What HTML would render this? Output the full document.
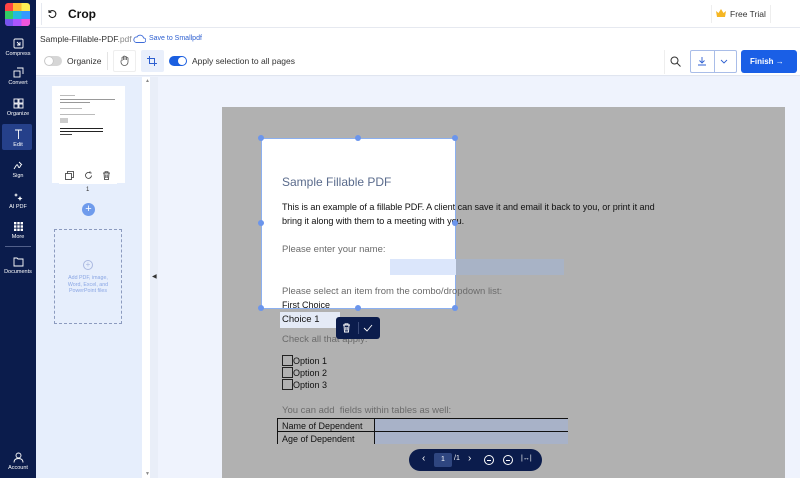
<!DOCTYPE html>
<html><head><meta charset="utf-8"><style>
*{margin:0;padding:0;box-sizing:border-box}
body{width:800px;height:478px;overflow:hidden;font-family:"Liberation Sans",sans-serif;background:#eef2fb;position:relative}
.abs{position:absolute}
.sb{left:0;top:0;width:36px;height:478px;background:#0b1c4c;color:#fff}
.sb .it{position:absolute;left:0;width:36px;text-align:center;font-size:5.5px}
.sb svg{display:block;margin:0 auto 2px}
.hdr{left:36px;top:0;width:764px;height:28px;background:#fff;border-bottom:1px solid #e6e9f0}
.tb{left:36px;top:28px;width:764px;height:48px;background:#fff;border-bottom:1px solid #e0e5f0}
.txt{font-size:9px;color:#333}
.pdf{font-family:"Liberation Sans",sans-serif;font-size:8.5px;color:#111}
.lt{color:#6b6b6b}
</style></head><body>
<div class="abs sb">
  <div class="abs" style="left:5px;top:3px;width:25px;height:23px;border-radius:3px;overflow:hidden;background:linear-gradient(90deg,#f44 0 33%,#fb3 33% 66%,#fe5 66%)">
    <div style="position:absolute;top:8px;left:0;width:25px;height:8px;background:linear-gradient(90deg,#3c6 0 33%,#2bd 33% 66%,#39f 66%)"></div>
    <div style="position:absolute;top:16px;left:0;width:25px;height:7px;background:linear-gradient(90deg,#75e 0 33%,#a5f 33% 66%,#e5d 66%)"></div>
  </div>
  <div class="it" style="top:38px"><svg width="11" height="11" viewBox="0 0 11 11" fill="none" stroke="#fff" stroke-width="0.9"><rect x="1" y="1" width="9" height="9" rx="1"/><path d="M4 4l3 3M7 4v3H4"/></svg>Compress</div>
  <div class="it" style="top:67px"><svg width="11" height="11" viewBox="0 0 11 11" fill="none" stroke="#fff" stroke-width="0.9"><rect x="1" y="4" width="6" height="6"/><path d="M4 1h6v6"/></svg>Convert</div>
  <div class="it" style="top:98px"><svg width="11" height="11" viewBox="0 0 11 11" fill="none" stroke="#fff" stroke-width="0.9"><rect x="1" y="1" width="4" height="4"/><rect x="6" y="1" width="4" height="4"/><rect x="1" y="6" width="4" height="4"/><rect x="6" y="6" width="4" height="4"/></svg>Organize</div>
  <div class="abs" style="left:2px;top:124px;width:30px;height:26px;background:#25408a;border-radius:2px"></div>
  <div class="it" style="top:129px"><svg width="11" height="11" viewBox="0 0 11 11" fill="none" stroke="#fff" stroke-width="0.9"><path d="M2 1h7M5.5 1v9"/></svg>Edit</div>
  <div class="it" style="top:160px"><svg width="11" height="11" viewBox="0 0 11 11" fill="none" stroke="#fff" stroke-width="0.9"><path d="M1 9c2-3 3-6 4-3s2 1 3-1M6 2l3 3"/></svg>Sign</div>
  <div class="it" style="top:191px"><svg width="11" height="11" viewBox="0 0 11 11" fill="#fff"><path d="M3 2l.6 1.4L5 4l-1.4.6L3 6l-.6-1.4L1 4l1.4-.6zM7 5l.8 1.7L9.5 7.5l-1.7.8L7 10l-.8-1.7L4.5 7.5l1.7-.8z"/></svg>AI PDF</div>
  <div class="it" style="top:221px"><svg width="11" height="11" viewBox="0 0 11 11" fill="#fff"><rect x="1" y="1" width="2.4" height="2.4"/><rect x="4.3" y="1" width="2.4" height="2.4"/><rect x="7.6" y="1" width="2.4" height="2.4"/><rect x="1" y="4.3" width="2.4" height="2.4"/><rect x="4.3" y="4.3" width="2.4" height="2.4"/><rect x="7.6" y="4.3" width="2.4" height="2.4"/><rect x="1" y="7.6" width="2.4" height="2.4"/><rect x="4.3" y="7.6" width="2.4" height="2.4"/><rect x="7.6" y="7.6" width="2.4" height="2.4"/></svg>More</div>
  <div class="abs" style="left:5px;top:246px;width:26px;height:1px;background:#52608a"></div>
  <div class="it" style="top:256px"><svg width="11" height="11" viewBox="0 0 11 11" fill="none" stroke="#fff" stroke-width="0.9"><path d="M1 2h3l1 1h5v7H1z"/></svg>Documents</div>
  <div class="it" style="top:452px"><svg width="11" height="11" viewBox="0 0 11 11" fill="none" stroke="#fff" stroke-width="0.9"><circle cx="5.5" cy="3.5" r="2.5"/><path d="M1 10.5c0-3 2-4 4.5-4s4.5 1 4.5 4"/></svg>Account</div>
</div>
<div class="abs hdr">
  <div class="abs" style="left:5px;top:3px;width:1px;height:22px;background:#e6e9f0"></div>
  <svg class="abs" style="left:11px;top:9px" width="10" height="10" viewBox="0 0 10 10" fill="none" stroke="#222" stroke-width="1.1"><path d="M2.5 3A3.5 3.5 0 1 1 2 6"/><path d="M2 1v2.3h2.3"/></svg>
  <div class="abs" style="left:32px;top:7px;font-size:12px;font-weight:bold;color:#111">Crop</div>
  <div class="abs" style="left:675px;top:5px;width:60px;height:18px;border-left:1px solid #eee;border-right:1px solid #eee"></div>
  <svg class="abs" style="left:680px;top:9px" width="10" height="9" viewBox="0 0 10 9"><path d="M0 2l2.5 2L5 0l2.5 4L10 2 9 8H1z" fill="#f5b623"/></svg>
  <div class="abs txt" style="left:694px;top:9px;font-size:8.5px">Free Trial</div>
  <svg class="abs" style="left:779px;top:8px" width="11" height="11" viewBox="0 0 11 11" fill="none" stroke="#444" stroke-width="0.9"><circle cx="5.5" cy="3.5" r="2.5"/><path d="M1 10.5c0-3 2-4 4.5-4s4.5 1 4.5 4"/></svg>
</div>
<div class="abs tb">
  <div class="abs" style="left:4px;top:6px;font-size:8.5px;color:#333">Sample-Fillable-PDF<span style="color:#888">.pdf</span></div>
  <svg class="abs" style="left:97px;top:6px" width="13" height="9" viewBox="0 0 13 9" fill="none" stroke="#3d6bd8" stroke-width="0.9"><path d="M3 8.5h7.5a2.3 2.3 0 0 0 0-4.6A3.5 3.5 0 0 0 4 3 2.8 2.8 0 0 0 3 8.5z"/></svg>
  <div class="abs" style="left:113px;top:7px;font-size:7px;color:#2d5fd0">Save to Smallpdf</div>
  <div class="abs" style="left:8px;top:28px;width:18px;height:10px;border-radius:5px;background:#d6d6d6"><div style="position:absolute;left:1px;top:1px;width:8px;height:8px;border-radius:50%;background:#fff;box-shadow:0 0 1px #888"></div></div>
  <div class="abs txt" style="left:31px;top:28px;font-size:8.5px">Organize</div>
  <div class="abs" style="left:71px;top:24px;width:1px;height:18px;background:#e4e4e4"></div>
  <div class="abs" style="left:77px;top:22px;width:23px;height:22px;border:1px solid #eee;border-radius:2px"></div>
  <svg class="abs" style="left:84px;top:27px" width="9" height="11" viewBox="0 0 9 11" fill="none" stroke="#555" stroke-width="0.8"><path d="M2 6V2.5a.8.8 0 0 1 1.5 0V5M3.5 5V1.5a.8.8 0 0 1 1.5 0V5M5 5V2a.8.8 0 0 1 1.5 0v3M6.5 5V3a.8.8 0 0 1 1.5 0v4c0 2-1.5 3.5-3.5 3.5S1 9 1 7V5.5"/></svg>
  <div class="abs" style="left:105px;top:22px;width:23px;height:22px;background:#e9effb;border-radius:2px"></div>
  <svg class="abs" style="left:111px;top:28px" width="10" height="10" viewBox="0 0 10 10" fill="none" stroke="#2d5fd0" stroke-width="1"><path d="M2.5 0v7.5H10M0 2.5h7.5V10"/></svg>
  <div class="abs" style="left:133px;top:28px;width:18px;height:10px;border-radius:5px;background:#1b5fe0"><div style="position:absolute;right:1px;top:1px;width:8px;height:8px;border-radius:50%;background:#fff"></div></div>
  <div class="abs txt" style="left:156px;top:28px;font-size:8.5px">Apply selection to all pages</div>
  <div class="abs" style="left:628px;top:22px;width:23px;height:24px;border-left:1px solid #eee"></div>
  <svg class="abs" style="left:634px;top:28px" width="11" height="11" viewBox="0 0 11 11" fill="none" stroke="#333" stroke-width="1"><circle cx="4.5" cy="4.5" r="3.5"/><path d="M7 7l3.5 3.5"/></svg>
  <div class="abs" style="left:654px;top:22px;width:47px;height:23px;border:1px solid #a9bde8;border-radius:2px;background:#fff"><div style="position:absolute;left:23px;top:0;width:1px;height:21px;background:#a9bde8"></div></div>
  <svg class="abs" style="left:661px;top:28px" width="10" height="10" viewBox="0 0 10 10" fill="none" stroke="#2d5fd0" stroke-width="0.9"><path d="M5 1v6M2.5 4.5L5 7l2.5-2.5M1 9h8"/></svg>
  <svg class="abs" style="left:684px;top:31px" width="8" height="5" viewBox="0 0 8 5" fill="none" stroke="#2d5fd0" stroke-width="0.9"><path d="M1 1l3 3 3-3"/></svg>
  <div class="abs" style="left:705px;top:22px;width:56px;height:23px;background:#1a5fe6;border-radius:3px;color:#fff;font-size:8px;font-weight:bold;line-height:23px;padding-left:9px">Finish &rarr;</div>
</div>
<!-- thumbnail panel -->
<div class="abs" style="left:36px;top:77px;width:106px;height:401px;background:#e6eefc"></div>
<div class="abs" style="left:142px;top:77px;width:8px;height:401px;background:#fff"></div>
<div class="abs" style="left:145px;top:78px;font-size:5px;color:#888">▲</div>
<div class="abs" style="left:145px;top:471px;font-size:5px;color:#888">▼</div>
<div class="abs" style="left:150px;top:77px;width:8px;height:401px;background:#e9eef8"></div>
<div class="abs" style="left:152px;top:273px;font-size:6px;color:#333">◀</div>
<div class="abs" style="left:52px;top:86px;width:73px;height:97px;background:#fff">
  <div style="position:absolute;left:8px;top:9px;width:15px;height:1px;background:#bbb"></div>
  <div style="position:absolute;left:8px;top:13px;width:55px;height:1px;background:#999"></div>
  <div style="position:absolute;left:8px;top:16px;width:30px;height:1px;background:#999"></div>
  <div style="position:absolute;left:8px;top:22px;width:22px;height:1px;background:#bbb"></div>
  <div style="position:absolute;left:8px;top:28px;width:35px;height:1px;background:#bbb"></div>
  <div style="position:absolute;left:8px;top:32px;width:8px;height:5px;background:#ccc"></div>
  <div style="position:absolute;left:8px;top:42px;width:43px;height:1px;background:#222"></div>
  <div style="position:absolute;left:8px;top:45px;width:43px;height:1px;background:#222"></div>
  <div style="position:absolute;left:8px;top:48px;width:12px;height:1px;background:#444"></div>
</div>
<div class="abs" style="left:59px;top:167px;width:58px;height:17px;background:#fff"></div>
<svg class="abs" style="left:65px;top:171px" width="9" height="9" viewBox="0 0 9 9" fill="none" stroke="#333" stroke-width="0.8"><rect x="0.5" y="2.5" width="6" height="6"/><path d="M2.5 2.5V.5h6v6h-2"/></svg>
<svg class="abs" style="left:84px;top:171px" width="9" height="9" viewBox="0 0 9 9" fill="none" stroke="#333" stroke-width="0.8"><path d="M7.5 4.5A3 3 0 1 1 6 1.8M6 .3v1.7h1.7"/></svg>
<svg class="abs" style="left:102px;top:171px" width="9" height="9" viewBox="0 0 9 9" fill="none" stroke="#333" stroke-width="0.8"><path d="M1 2h7M3 2V.8h3V2M2 2l.5 6.5h4L7 2M3.8 3.5v3.5M5.2 3.5v3.5"/></svg>
<div class="abs" style="left:86px;top:187px;font-size:6px;color:#333">1</div>
<div class="abs" style="left:82px;top:203px;width:13px;height:13px;border-radius:50%;background:#6f9bec;color:#fff;font-size:11px;line-height:13px;text-align:center">+</div>
<div class="abs" style="left:54px;top:229px;width:68px;height:95px;border:1px dashed #8c9bbf"></div>
<div class="abs" style="left:83px;top:260px;width:10px;height:10px;border-radius:50%;border:1px solid #aab8e0;color:#aab8e0;font-size:8px;line-height:8px;text-align:center">+</div>
<div class="abs" style="left:58px;top:275px;width:60px;text-align:center;font-size:5.3px;line-height:6.5px;color:#8aa6e4">Add PDF, image,<br>Word, Excel, and<br>PowerPoint files</div>
<!-- canvas -->
<div class="abs" style="left:158px;top:77px;width:642px;height:401px;background:#eff3fd"></div>
<div class="abs" style="left:222px;top:107px;width:563px;height:371px;background:#b1b1b1"></div>
<div class="abs" style="left:261px;top:138px;width:195px;height:171px;background:#fff;border:1px solid #8cb0f0"></div>
<div class="abs" style="left:390px;top:259px;width:66px;height:16px;background:#dbe6fb"></div>
<div class="abs" style="left:456px;top:259px;width:108px;height:16px;background:#a8b3c6"></div>
<div class="abs pdf" style="left:282px;top:175px;font-size:12px;color:#5a6b8c">Sample Fillable PDF</div>
<div class="abs pdf" style="left:282px;top:200px;line-height:14px;font-size:9.1px;letter-spacing:-0.05px">This is an example of a fillable PDF. A client can save it and email it back to you, or print it and<br>bring it along with them to a meeting with you.</div>
<div class="abs pdf lt" style="left:282px;top:244px;font-size:9.5px">Please enter your name:</div>
<div class="abs pdf lt" style="left:282px;top:286px;font-size:9.5px">Please select an item from the combo/dropdown list:</div>
<div class="abs pdf" style="left:282px;top:300px;font-size:9px">First Choice</div>
<div class="abs" style="left:280px;top:312px;width:60px;height:16px;background:#e4eaf6"></div>
<div class="abs" style="left:282px;top:314px;font-size:9.5px;color:#111">Choice 1</div>
<div class="abs pdf lt" style="left:282px;top:334px;font-size:9.5px">Check all that apply:</div>
<div class="abs pdf" style="left:282px;top:355px;line-height:12px;font-size:9px">
  <div><span style="display:inline-block;width:11px;height:11px;border:1px solid #222;vertical-align:-2px"></span>Option 1</div>
  <div><span style="display:inline-block;width:11px;height:11px;border:1px solid #222;vertical-align:-2px"></span>Option 2</div>
  <div><span style="display:inline-block;width:11px;height:11px;border:1px solid #222;vertical-align:-2px"></span>Option 3</div>
</div>
<div class="abs pdf lt" style="left:282px;top:405px;font-size:9.5px">You can add&nbsp; fields within tables as well:</div>
<div class="abs" style="left:277px;top:418px;width:291px;height:26px;border-left:1px solid #111;border-right:1px solid #111;border-top:1px solid #111">
  <div style="position:absolute;left:96px;top:0;width:194px;height:25px;background:#a8b2c8"></div>
  <div style="position:absolute;left:96px;top:0;width:1px;height:25px;background:#111"></div>
  <div style="position:absolute;left:0;top:12px;width:290px;height:1px;background:#111"></div>
  <div class="pdf" style="position:absolute;left:4px;top:1px;line-height:12.5px;font-size:9px">Name of Dependent<br>Age of Dependent</div>
</div>
<!-- handles -->
<div class="abs" style="left:258px;top:135px;width:6px;height:6px;border-radius:50%;background:#6b95ec"></div>
<div class="abs" style="left:355px;top:135px;width:6px;height:6px;border-radius:50%;background:#6b95ec"></div>
<div class="abs" style="left:452px;top:135px;width:6px;height:6px;border-radius:50%;background:#6b95ec"></div>
<div class="abs" style="left:258px;top:220px;width:6px;height:6px;border-radius:50%;background:#6b95ec"></div>
<div class="abs" style="left:452px;top:220px;width:6px;height:6px;border-radius:50%;background:#6b95ec"></div>
<div class="abs" style="left:258px;top:305px;width:6px;height:6px;border-radius:50%;background:#6b95ec"></div>
<div class="abs" style="left:355px;top:305px;width:6px;height:6px;border-radius:50%;background:#6b95ec"></div>
<div class="abs" style="left:452px;top:305px;width:6px;height:6px;border-radius:50%;background:#6b95ec"></div>
<div class="abs" style="left:336px;top:317px;width:44px;height:22px;background:#0b1c4c;border-radius:3px"><div style="position:absolute;left:22px;top:5px;width:1px;height:12px;background:#3a4a78"></div></div>
<svg class="abs" style="left:342px;top:323px" width="9" height="10" viewBox="0 0 9 10" fill="none" stroke="#fff" stroke-width="0.9"><path d="M1 2h7M3 2V.8h3V2M2 2l.5 7h4L7 2M3.8 4v3.5M5.2 4v3.5"/></svg>
<svg class="abs" style="left:363px;top:324px" width="10" height="8" viewBox="0 0 10 8" fill="none" stroke="#fff" stroke-width="0.9"><path d="M1 4l3 3 5-6"/></svg>
<!-- pager -->
<div class="abs" style="left:409px;top:449px;width:133px;height:22px;background:#0b1c4c;border-radius:11px;color:#fff;font-size:8px">
  <div style="position:absolute;left:13px;top:4px;font-size:10px">‹</div>
  <div style="position:absolute;left:25px;top:4px;width:18px;height:14px;background:#2f4680;border-radius:2px;text-align:center;line-height:14px;font-size:7px">1</div>
  <div style="position:absolute;left:45px;top:6px;font-size:7px">/1</div>
  <div style="position:absolute;left:59px;top:4px;font-size:10px">›</div>
  <div style="position:absolute;left:75px;top:6px;width:10px;height:10px;border:1px solid #fff;border-radius:50%"><div style="position:absolute;left:2px;top:4px;width:4px;height:1px;background:#fff"></div></div>
  <div style="position:absolute;left:94px;top:6px;width:10px;height:10px;border:1px solid #fff;border-radius:50%"><div style="position:absolute;left:2px;top:4px;width:4px;height:1px;background:#fff"></div></div>
  <div style="position:absolute;left:112px;top:6px;font-size:7px">|↔|</div>
</div>
</body></html>
